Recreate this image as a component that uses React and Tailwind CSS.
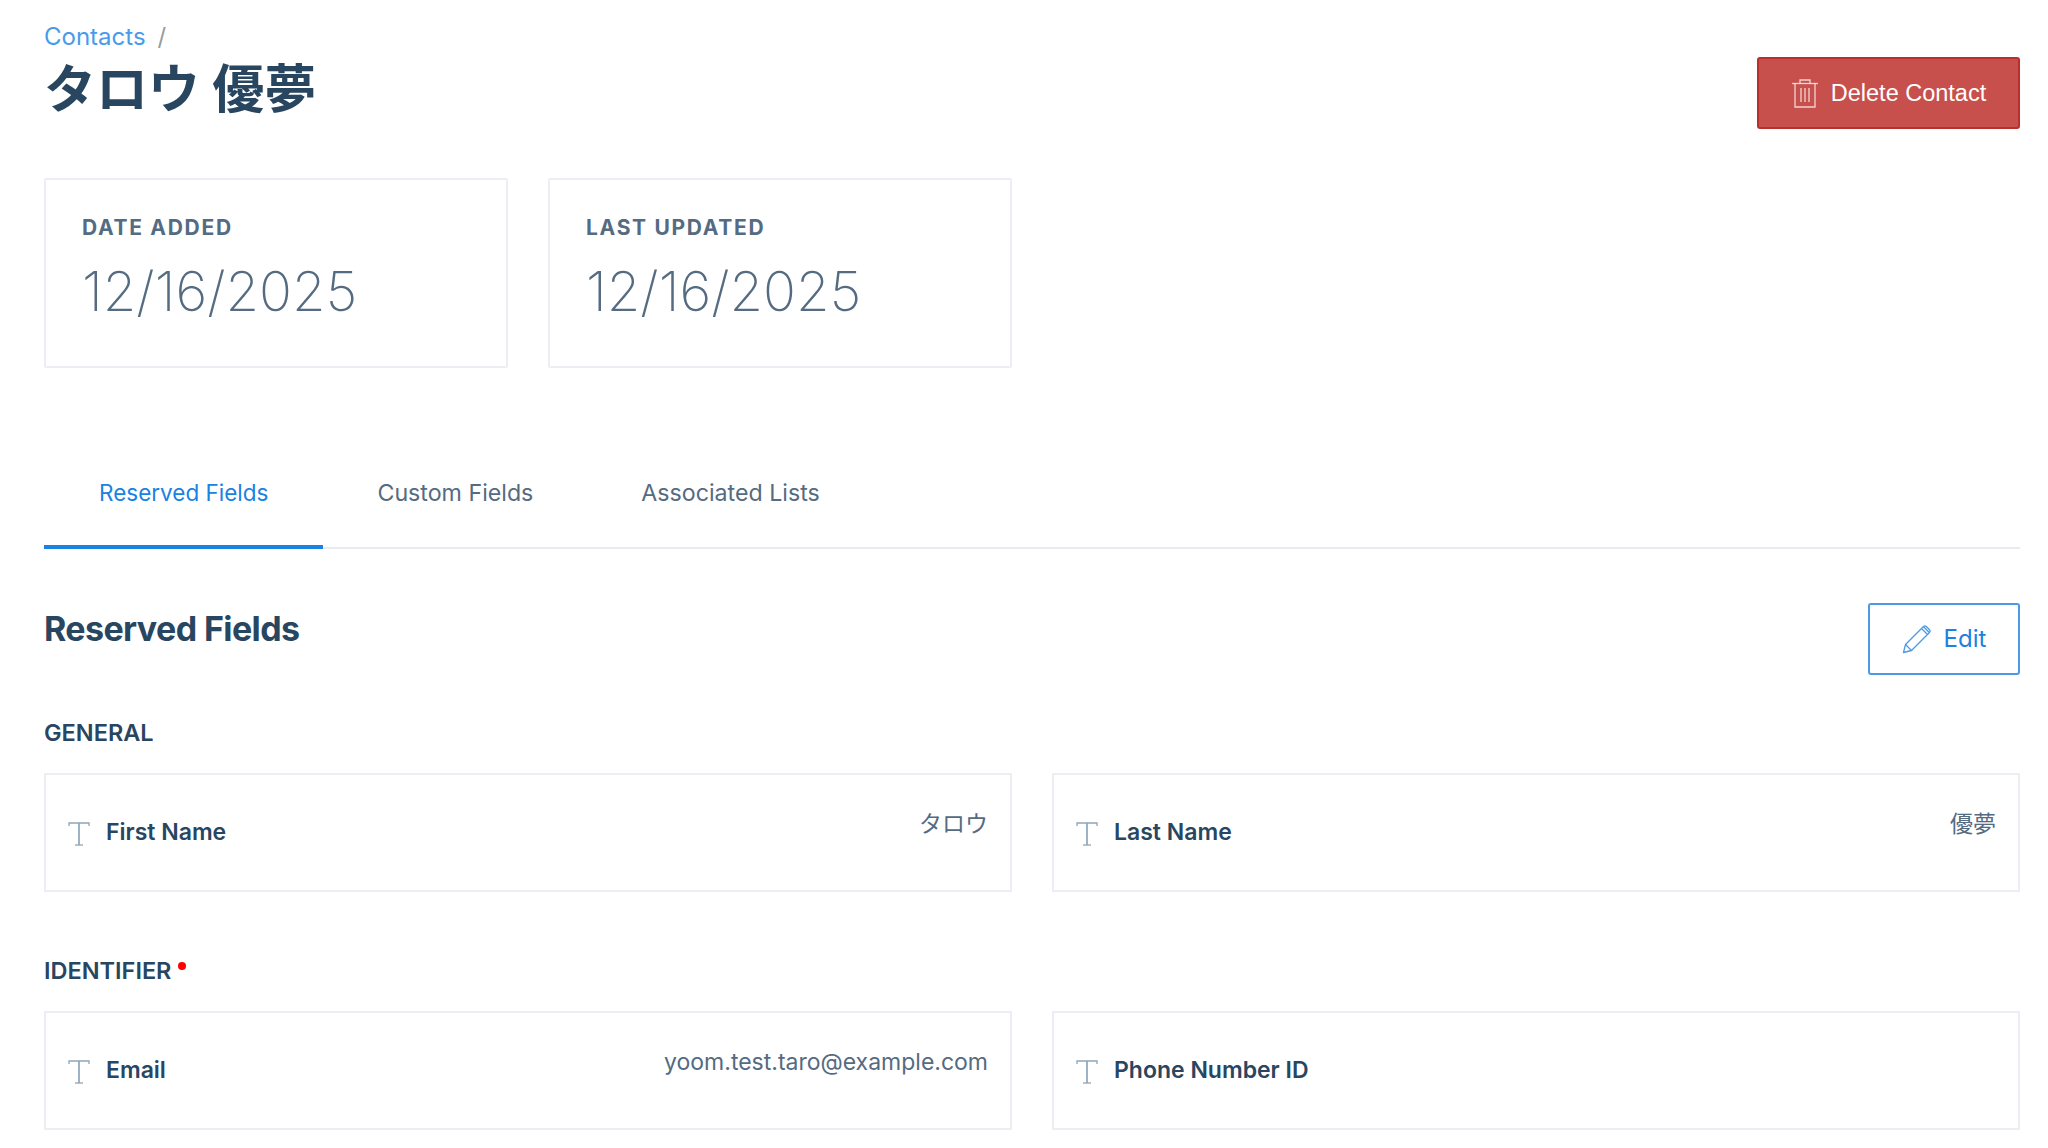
import React from "react";

function TrashIcon() {
  return (
    <svg width="28" height="30" viewBox="0 0 28 30" fill="none" stroke="currentColor" strokeWidth="1.3" className="text-white/75">
      <path d="M1 5.5h26" />
      <path d="M9 5.5V2h10v3.5" />
      <path d="M4 5.5V29h20V5.5" />
      <path d="M10 10v14M14 10v14M18 10v14" />
    </svg>
  );
}

function PencilIcon() {
  return (
    <svg width="30" height="30" viewBox="0 0 30 30" fill="none" stroke="#4a9ae8" strokeWidth="1.3" strokeLinejoin="round">
      <path d="M1.5 28.5l2-8L21.5 2.5a2 2 0 0 1 2.8 0l3.2 3.2a2 2 0 0 1 0 2.8L9.5 26.5z" />
      <path d="M3.5 20.5l6 6" />
      <path d="M19.5 4.5l6 6" />
      <path d="M21.5 2.7l5.8 5.8" />
    </svg>
  );
}

function TIcon() {
  return (
    <svg width="22" height="24" viewBox="0 0 22 24" fill="none" stroke="#8fa5b9" strokeWidth="1.3" className="shrink-0 mt-[2px]">
      <path d="M1 4V1h20v3" />
      <path d="M11 1v22" strokeWidth="1.7" />
      <path d="M7 23h8" />
    </svg>
  );
}

function StatCard({ label, value }) {
  return (
    <div className="w-[464px] h-[190px] border-2 border-[#eceef3] rounded-[2px] pl-[36px] pt-[36px]">
      <div className="text-[21px] leading-[24px] font-bold tracking-[1.7px] text-[#546b81]">{label}</div>
      <div className="mt-[21px] text-[54.5px] leading-[60px] font-extralight text-[#546b81]">{value}</div>
    </div>
  );
}

function FieldCard({ label, value }) {
  return (
    <div className="flex-1 h-[119px] border-2 border-[#eceef3] flex justify-between pl-[22px] pr-[22px]">
      <div className="flex items-center gap-[16px]">
        <TIcon />
        <span className="text-[23px] font-semibold text-[#294661]">{label}</span>
      </div>
      {value && <div className="pt-[34px] text-[23px] leading-[30px] text-[#546b81]">{value}</div>}
    </div>
  );
}

export default function App() {
  return (
    <div
      className="min-h-screen bg-white pl-[44px] pr-[28px] pt-[22px] overflow-hidden"
      style={{ fontFamily: 'Inter, "Noto Sans CJK JP", sans-serif' }}
    >
      <div className="flex justify-between">
        <div>
          <div className="flex items-center gap-[12px] text-[24px] leading-[30px]">
            <span className="text-[#489be8]">Contacts</span>
            <span className="text-[#9b9b9b]">/</span>
          </div>
          <h1 className="text-[52px] leading-[64px] font-bold text-[#294661] mt-[6px]">タロウ 優夢</h1>
        </div>
        <button className="mt-[35px] w-[263px] h-[72px] flex items-center justify-center gap-[12px] bg-[#c7504d] border-2 border-[#b92f2c] rounded-[3px] text-white text-[23.5px]" style={{ fontFamily: '"Liberation Sans", sans-serif' }}>
          <TrashIcon />
          <span className="pt-[2px]">Delete Contact</span>
        </button>
      </div>

      <div className="flex gap-[40px] mt-[49px]">
        <StatCard label="DATE ADDED" value="12/16/2025" />
        <StatCard label="LAST UPDATED" value="12/16/2025" />
      </div>

      <div className="flex mt-[85px] border-b-2 border-[#e9ebf0] h-[96px]">
        <div className="h-[96px] px-[55px] border-b-4 border-[#1a82e2] text-[#1a82e2] text-[22.5px] flex items-center justify-center pb-[12px]">Reserved Fields</div>
        <div className="h-[96px] px-[54px] border-b-4 border-transparent text-[#546b81] text-[23.2px] flex items-center justify-center pb-[12px]">Custom Fields</div>
        <div className="h-[96px] px-[54px] border-b-4 border-transparent text-[#546b81] text-[23.2px] flex items-center justify-center pb-[12px]">Associated Lists</div>
      </div>

      <div className="flex justify-between mt-[54px]">
        <h2 className="text-[34px] leading-[44px] font-bold tracking-[-0.6px] text-[#294661] mt-[4px]">Reserved Fields</h2>
        <button className="w-[152px] h-[72px] flex items-center justify-center gap-[12px] border-2 border-[#4a9ae8] rounded-[3px] text-[#1a82e2] text-[24px]">
          <PencilIcon />
          Edit
        </button>
      </div>

      <div className="mt-[44px] text-[23.5px] leading-[28px] font-semibold text-[#294661]">GENERAL</div>
      <div className="flex gap-[40px] mt-[26px]">
        <FieldCard label="First Name" value="タロウ" />
        <FieldCard label="Last Name" value="優夢" />
      </div>

      <div className="mt-[65px] text-[23.5px] leading-[28px] font-semibold text-[#294661] flex">
        IDENTIFIER
        <span className="w-[8px] h-[8px] rounded-full bg-[#ff0000] ml-[7px] mt-[5px]"></span>
      </div>
      <div className="flex gap-[40px] mt-[26px]">
        <FieldCard label="Email" value="yoom.test.taro@example.com" />
        <FieldCard label="Phone Number ID" />
      </div>
    </div>
  );
}
